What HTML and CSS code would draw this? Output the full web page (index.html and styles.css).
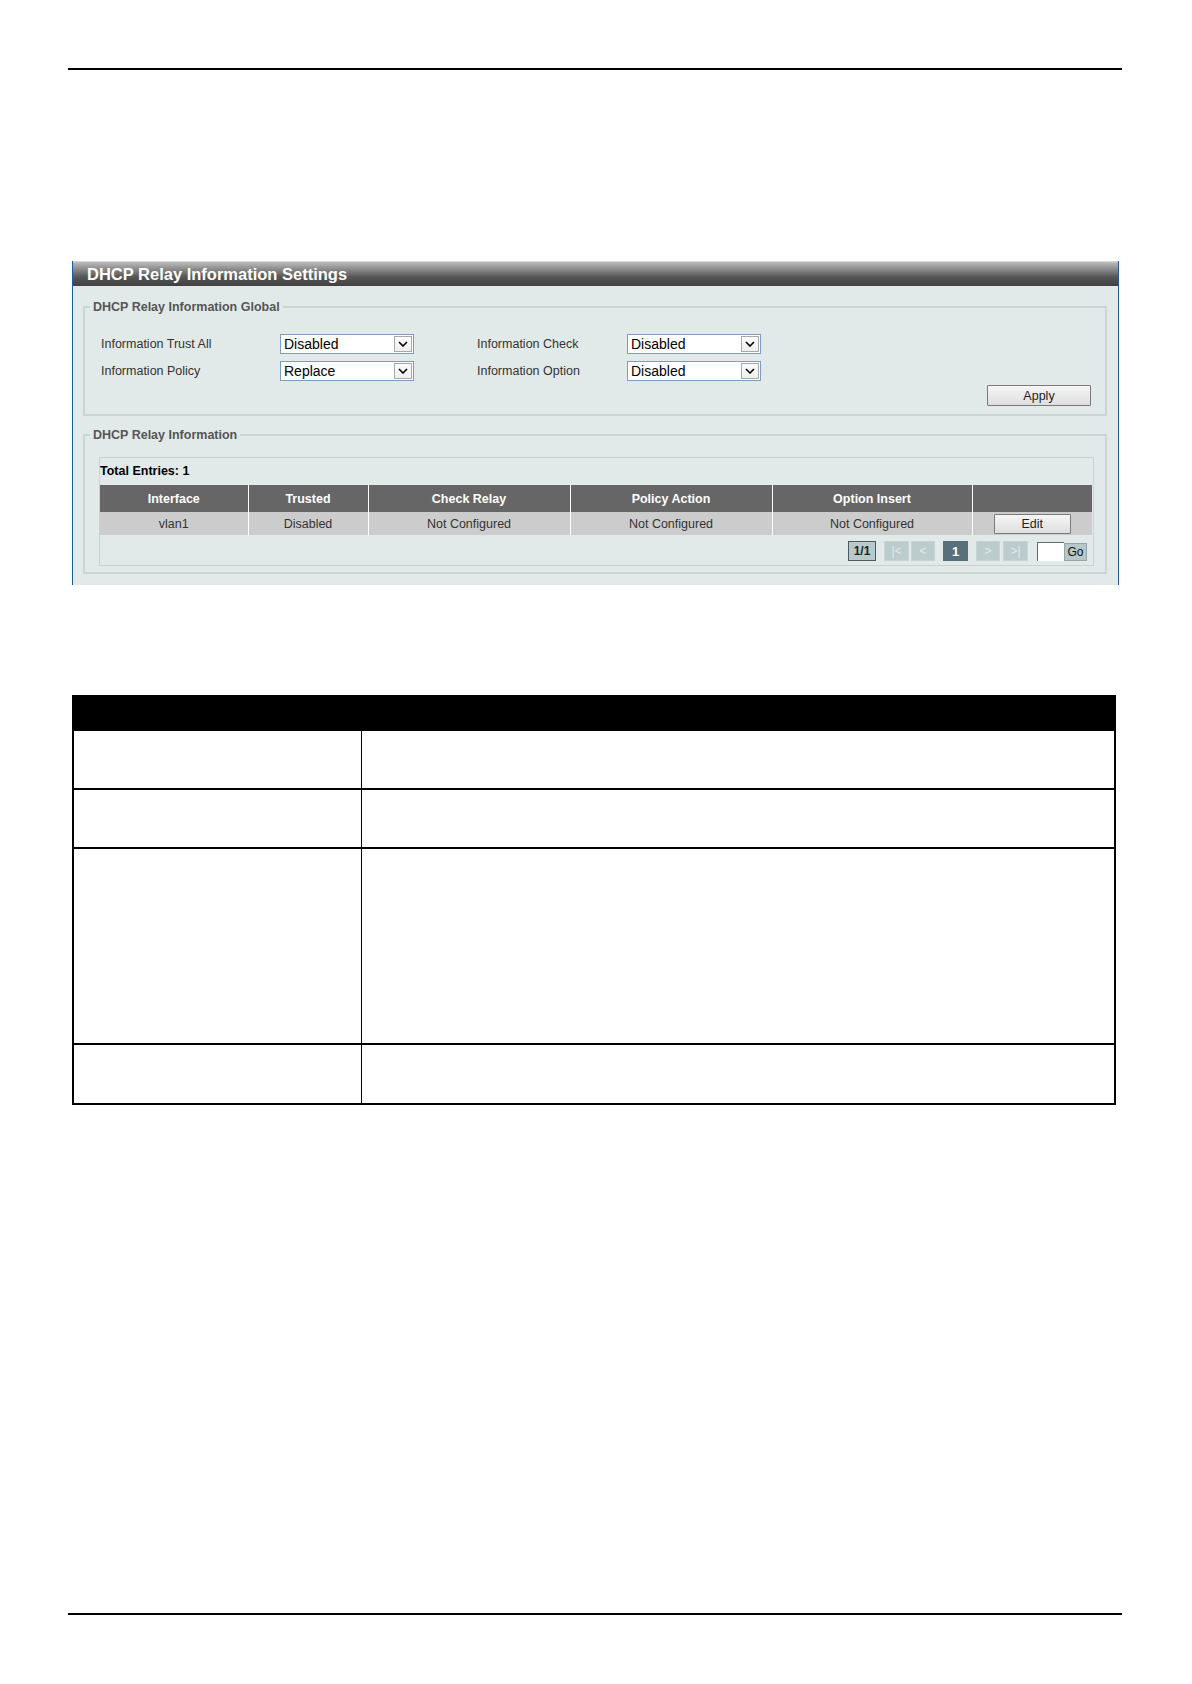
FILE: index.html
```html
<!DOCTYPE html>
<html lang="en">
<head>
<meta charset="utf-8">
<title>DHCP Relay Information Settings</title>
<link rel="stylesheet" href="styles.css">
</head>
<body>
<div class="page">
  <div class="rule"></div>

  <section class="panel">
    <div class="panel-head">DHCP Relay Information Settings</div>
    <div class="panel-body">
      <fieldset class="group group-global">
        <legend>DHCP Relay Information Global</legend>
        <div class="form-grid">
          <span class="lbl">Information Trust All</span>
          <div class="combo"><span class="combo-val">Disabled</span><span class="combo-btn"><svg viewBox="0 0 10 6" width="10" height="6"><polyline points="1,1 5,5 9,1" fill="none" stroke="#000" stroke-width="1.6"/></svg></span></div>
          <span class="lbl">Information Check</span>
          <div class="combo"><span class="combo-val">Disabled</span><span class="combo-btn"><svg viewBox="0 0 10 6" width="10" height="6"><polyline points="1,1 5,5 9,1" fill="none" stroke="#000" stroke-width="1.6"/></svg></span></div>

          <span class="lbl">Information Policy</span>
          <div class="combo"><span class="combo-val">Replace</span><span class="combo-btn"><svg viewBox="0 0 10 6" width="10" height="6"><polyline points="1,1 5,5 9,1" fill="none" stroke="#000" stroke-width="1.6"/></svg></span></div>
          <span class="lbl">Information Option</span>
          <div class="combo"><span class="combo-val">Disabled</span><span class="combo-btn"><svg viewBox="0 0 10 6" width="10" height="6"><polyline points="1,1 5,5 9,1" fill="none" stroke="#000" stroke-width="1.6"/></svg></span></div>
        </div>
        <div class="actions"><button class="btn btn-apply" type="button">Apply</button></div>
      </fieldset>

      <fieldset class="group group-list">
        <legend>DHCP Relay Information</legend>
        <div class="list-box">
          <div class="total">Total Entries: 1</div>
          <table class="grid">
            <colgroup>
              <col class="c-if"><col class="c-tr"><col class="c-cr"><col class="c-pa"><col class="c-oi"><col class="c-ed">
            </colgroup>
            <thead>
              <tr><th>Interface</th><th>Trusted</th><th>Check Relay</th><th>Policy Action</th><th>Option Insert</th><th></th></tr>
            </thead>
            <tbody>
              <tr><td>vlan1</td><td>Disabled</td><td>Not Configured</td><td>Not Configured</td><td>Not Configured</td><td><button class="btn btn-edit" type="button">Edit</button></td></tr>
            </tbody>
          </table>
          <div class="pager">
            <span class="pg pg-count">1/1</span>
            <span class="pg pg-off pg-first">|&lt;</span>
            <span class="pg pg-off pg-prev">&lt;</span>
            <span class="pg pg-cur">1</span>
            <span class="pg pg-off pg-next">&gt;</span>
            <span class="pg pg-off pg-last">&gt;|</span>
            <span class="pg-input"></span>
            <span class="pg pg-go">Go</span>
          </div>
        </div>
      </fieldset>
    </div>
  </section>

  <table class="desc">
    <thead>
      <tr><th class="desc-k"></th><th></th></tr>
    </thead>
    <tbody>
      <tr class="r1"><td class="desc-k"></td><td></td></tr>
      <tr class="r2"><td class="desc-k"></td><td></td></tr>
      <tr class="r3"><td class="desc-k"></td><td></td></tr>
      <tr class="r4"><td class="desc-k"></td><td></td></tr>
    </tbody>
  </table>

  <div class="rule rule-bottom"></div>
  <div class="cut-line"></div>
</div>
</body>
</html>
```

FILE: styles.css
```css
html, body {
  margin: 0;
  padding: 0;
  background: #fff;
}

body {
  font-family: "Liberation Sans", Arial, sans-serif;
  color: #000;
}

.page {
  width: 1192px;
  height: 1684px;
  overflow: hidden;
}

/* page rules */
.rule {
  margin: 68px 0 0 68px;
  width: 1054px;
  height: 2px;
  background: #000;
}

.rule-bottom {
  margin-top: 508px;
}

.cut-line {
  margin: 69px 0 0 68px;
  width: 836px;
  height: 1px;
  background: #111;
}

/* settings panel */
.panel {
  box-sizing: border-box;
  margin: 191px 0 0 72px;
  width: 1047px;
  height: 324px;
  border-left: 1px solid #1d5d9c;
  border-right: 1px solid #1d5d9c;
  background: #e2eae9;
}

.panel-head {
  height: 24px;
  line-height: 24px;
  padding-left: 14px;
  color: #fff;
  font-size: 16.5px;
  font-weight: bold;
  border-top: 1px solid #d8d8d8;
  background: linear-gradient(#bdbdbd 0%, #8e8e8e 28%, #575757 62%, #404040 100%);
}

.panel-body {
  padding: 14px 11px 0 10px;
}

.group {
  margin: 0;
  padding: 0 0 8px 5px;
  border: 2px solid #ccd4d4;
  min-width: 0;
}

.group legend {
  padding: 0 3px;
  font-size: 12.5px;
  line-height: 14px;
  font-weight: bold;
  color: #555;
}

.form-grid {
  display: grid;
  grid-template-columns: 179px 197px 150px 134px;
  grid-auto-rows: 20px;
  row-gap: 7px;
  margin: 20px 0 0 11px;
  align-items: center;
}

.lbl {
  font-size: 12.5px;
  color: #333;
}

.combo {
  box-sizing: border-box;
  display: flex;
  align-items: center;
  width: 134px;
  height: 20px;
  border: 1px solid #7c9cc0;
  background: #fff;
}

.combo-val {
  flex: 1;
  padding-left: 3px;
  font-size: 14px;
  color: #000;
}

.combo-btn {
  box-sizing: border-box;
  display: flex;
  align-items: center;
  justify-content: center;
  width: 18px;
  height: 16px;
  margin-right: 1px;
  border: 1px solid #a9a9a9;
  background: linear-gradient(#fdfdfd, #eeeeee);
}

.actions {
  display: flex;
  justify-content: flex-end;
  margin: 4px 14px 0 0;
}

.btn {
  box-sizing: border-box;
  padding: 0;
  font-family: "Liberation Sans", Arial, sans-serif;
  font-size: 12.5px;
  color: #222;
  border: 1px solid #7a7a7a;
  border-radius: 1px;
  background: linear-gradient(#f6f6f6, #dedede);
}

.btn-apply {
  width: 104px;
  height: 21px;
}

.group-list {
  margin-top: 12px;
  padding: 0 0 6px 5px;
}

.list-box {
  margin: 15px 11px 0 9px;
  border: 1px solid #c9d1d1;
  padding: 6px 0 4px;
}

.total {
  font-size: 12.5px;
  line-height: 14px;
  font-weight: bold;
  color: #000;
}

.grid {
  margin-top: 7px;
  width: 992px;
  border-collapse: collapse;
  table-layout: fixed;
  font-size: 12.5px;
}

.c-if { width: 148px; }
.c-tr { width: 120px; }
.c-cr { width: 202px; }
.c-pa { width: 202px; }
.c-oi { width: 200px; }
.c-ed { width: 120px; }

.grid th,
.grid td {
  padding: 0;
  text-align: center;
  border-left: 1px solid #fff;
}

.grid th:first-child,
.grid td:first-child {
  border-left: 0;
}

.grid th {
  height: 27px;
  background: #666;
  color: #fff;
  font-weight: bold;
}

.grid td {
  height: 23px;
  background: #ccc;
  color: #333;
}

.btn-edit {
  display: block;
  margin: 0 auto;
  width: 77px;
  height: 20px;
}

.pager {
  display: flex;
  justify-content: flex-end;
  align-items: flex-start;
  margin: 6px 6px 0 0;
  height: 20px;
}

.pg {
  box-sizing: border-box;
  display: flex;
  align-items: center;
  justify-content: center;
  height: 20px;
  font-size: 12px;
}

.pg-count {
  width: 28px;
  border: 1px solid #4c5a5d;
  background: #b8c9cb;
  color: #222;
  font-weight: bold;
}

.pg-off {
  width: 25px;
  border: 1px solid #c6d3d4;
  background: #bccbcc;
  color: #e4ecec;
}

.pg-first { margin-left: 8px; }
.pg-prev { margin-left: 2px; width: 24px; }
.pg-cur {
  margin-left: 8px;
  width: 25px;
  background: #58707a;
  color: #fff;
  font-weight: bold;
  font-size: 13px;
}
.pg-next { margin-left: 8px; width: 24px; }
.pg-last { margin-left: 3px; }

.pg-input {
  box-sizing: border-box;
  margin: 1px 0 0 9px;
  width: 27px;
  height: 19px;
  background: #fff;
  border-top: 1px solid #6a6a6a;
  border-left: 1px solid #6a6a6a;
}

.pg-go {
  margin-top: 2px;
  width: 23px;
  height: 18px;
  border: 1px solid #93a5a7;
  background: #b6c7c9;
  color: #111;
}

/* parameter description table */
.desc {
  margin: 110px 0 0 72px;
  width: 1044px;
  border-collapse: collapse;
  table-layout: fixed;
  border: 2px solid #000;
}

.desc th {
  height: 32px;
  padding: 0;
  background: #000;
}

.desc td {
  padding: 0;
  border-top: 2px solid #000;
}

.desc .desc-k {
  width: 287px;
  border-right: 1px solid #000;
}

.desc .r1 td { height: 57px; }
.desc .r2 td { height: 57px; }
.desc .r3 td { height: 194px; }
.desc .r4 td { height: 58px; }
```
